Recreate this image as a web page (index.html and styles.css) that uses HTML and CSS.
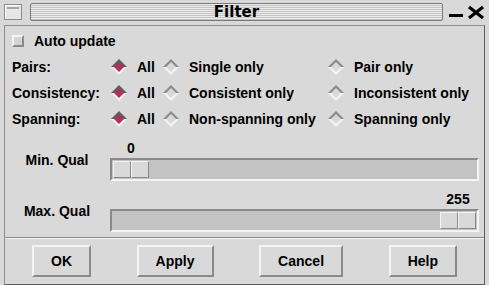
FILE: index.html
```html
<!DOCTYPE html>
<html lang="en">
<head>
  <meta charset="UTF-8">
  <title>Filter</title>
  <link rel="stylesheet" href="styles.css">
</head>
<body>

  <div class="titlebar">
    <div class="win-menu"><span></span></div>
    <div class="title">Filter</div>
    <svg class="win-btns" width="40" height="18" viewBox="0 0 40 18">
      <rect x="3" y="11" width="14" height="3" fill="#000"/>
      <path d="M23 4 L37 15 M37 4 L23 15" stroke="#000" stroke-width="3.2"/>
    </svg>
  </div>

  <div class="dialog">
    <div class="main">
      <div class="options">
        <label class="check-row"><span class="checkbox"></span>Auto update</label>

        <span class="opt-label">Pairs:</span>
        <span class="radio on"><svg viewBox="0 0 16 16"><path class="rt" d="M0 8 L8 0 L16 8Z"/><path class="rb" d="M0 8 L8 16 L16 8Z"/><path class="rf" d="M8 3 L13 8 L8 13 L3 8Z"/></svg>All</span>
        <span class="radio"><svg viewBox="0 0 16 16"><path class="rt" d="M0 8 L8 0 L16 8Z"/><path class="rb" d="M0 8 L8 16 L16 8Z"/><path class="rf" d="M8 3 L13 8 L8 13 L3 8Z"/></svg>Single only</span>
        <span class="radio"><svg viewBox="0 0 16 16"><path class="rt" d="M0 8 L8 0 L16 8Z"/><path class="rb" d="M0 8 L8 16 L16 8Z"/><path class="rf" d="M8 3 L13 8 L8 13 L3 8Z"/></svg>Pair only</span>

        <span class="opt-label">Consistency:</span>
        <span class="radio on"><svg viewBox="0 0 16 16"><path class="rt" d="M0 8 L8 0 L16 8Z"/><path class="rb" d="M0 8 L8 16 L16 8Z"/><path class="rf" d="M8 3 L13 8 L8 13 L3 8Z"/></svg>All</span>
        <span class="radio"><svg viewBox="0 0 16 16"><path class="rt" d="M0 8 L8 0 L16 8Z"/><path class="rb" d="M0 8 L8 16 L16 8Z"/><path class="rf" d="M8 3 L13 8 L8 13 L3 8Z"/></svg>Consistent only</span>
        <span class="radio"><svg viewBox="0 0 16 16"><path class="rt" d="M0 8 L8 0 L16 8Z"/><path class="rb" d="M0 8 L8 16 L16 8Z"/><path class="rf" d="M8 3 L13 8 L8 13 L3 8Z"/></svg>Inconsistent only</span>

        <span class="opt-label">Spanning:</span>
        <span class="radio on"><svg viewBox="0 0 16 16"><path class="rt" d="M0 8 L8 0 L16 8Z"/><path class="rb" d="M0 8 L8 16 L16 8Z"/><path class="rf" d="M8 3 L13 8 L8 13 L3 8Z"/></svg>All</span>
        <span class="radio"><svg viewBox="0 0 16 16"><path class="rt" d="M0 8 L8 0 L16 8Z"/><path class="rb" d="M0 8 L8 16 L16 8Z"/><path class="rf" d="M8 3 L13 8 L8 13 L3 8Z"/></svg>Non-spanning only</span>
        <span class="radio"><svg viewBox="0 0 16 16"><path class="rt" d="M0 8 L8 0 L16 8Z"/><path class="rb" d="M0 8 L8 16 L16 8Z"/><path class="rf" d="M8 3 L13 8 L8 13 L3 8Z"/></svg>Spanning only</span>
      </div>

      <div class="scales">
        <div class="scale-row">
          <span class="scale-label">Min. Qual</span>
          <div class="scale">
            <div class="scale-value" style="--pos: 0">0</div>
            <div class="trough"><div class="thumb" style="--pos: 0"></div></div>
          </div>
        </div>
        <div class="scale-row">
          <span class="scale-label">Max. Qual</span>
          <div class="scale">
            <div class="scale-value" style="--pos: 1">255</div>
            <div class="trough"><div class="thumb" style="--pos: 1"></div></div>
          </div>
        </div>
      </div>
    </div>

    <div class="buttons">
      <button>OK</button>
      <button>Apply</button>
      <button>Cancel</button>
      <button>Help</button>
    </div>
  </div>

</body>
</html>
```

FILE: styles.css
```css
body {
  margin: 0;
  width: 489px;
  height: 285px;
  overflow: hidden;
  background-color: #d9d9d9;
  color: #000;
  font-family: 'Liberation Sans', Arial, sans-serif;
  font-weight: bold;
  font-size: 14px;
}

/* window title bar */
.titlebar {
  height: 25px;
  box-sizing: border-box;
  padding: 3px 3px 0 4px;
  display: flex;
  align-items: flex-start;
  gap: 3px;
}

.win-menu {
  width: 18px;
  height: 16px;
  margin-top: 1px;
  box-sizing: border-box;
  border: 1px solid #8a8a8a;
  background-color: #e6e6e6;
  box-shadow: inset 1px 1px #fff;
}

.win-menu span {
  display: block;
  margin: 2px 2px 0;
  height: 2px;
  background-color: #a8a8a8;
}

.title {
  flex: 1;
  height: 18px;
  margin-left: 5px;
  box-sizing: border-box;
  border: 1px solid #7a7a7a;
  border-radius: 2px;
  background: repeating-linear-gradient(to bottom, #ececec 0, #ececec 1px, #c4c4c4 1px, #c4c4c4 2px);
  font-family: 'DejaVu Sans', sans-serif;
  font-size: 15px;
  line-height: 16px;
  text-align: center;
}

.win-btns {
  display: block;
}

/* dialog */
.dialog {
  margin: 0 4px;
  height: 260px;
  box-sizing: border-box;
  border: 1px solid;
  border-color: #8e8e8e #5c5c5c #5c5c5c #8e8e8e;
  display: flex;
  flex-direction: column;
}

.main {
  height: 211px;
  box-sizing: border-box;
  padding: 2px 5px 0 7px;
}

.options {
  display: grid;
  grid-template-columns: 99px 52px 165px auto;
  grid-auto-rows: 26px;
  align-items: center;
}

.check-row {
  grid-column: 1 / -1;
  display: flex;
  align-items: center;
  gap: 10px;
}

.checkbox {
  width: 12px;
  height: 12px;
  box-sizing: border-box;
  border: 2px solid;
  border-color: #f4f4f4 #8a8a8a #8a8a8a #f4f4f4;
  background-color: #d4d4d4;
}

.radio {
  display: flex;
  align-items: center;
  gap: 10px;
  white-space: nowrap;
}

.radio svg {
  width: 16px;
  height: 16px;
  display: block;
}

.radio .rt { fill: #8a8a8a; }
.radio .rb { fill: #f4f4f4; }
.radio .rf { fill: #d9d9d9; }
.radio.on .rt { fill: #5e5e5e; }
.radio.on .rf { fill: #b03060; }

/* scales */
.scales {
  margin: 8px 0 0 -5px;
  display: flex;
  flex-direction: column;
  gap: 10px;
}

.scale-row {
  display: flex;
  align-items: center;
}

.scale-label {
  width: 100px;
  text-align: center;
  margin-top: -2px;
}

.scale {
  flex: 1;
  margin-left: 3px;
}

.scale-value {
  width: 36px;
  height: 18px;
  line-height: 16px;
  text-align: center;
  margin-left: calc((100% - 42px) * var(--pos) + 3px);
}

.trough {
  height: 23px;
  box-sizing: border-box;
  border: 2px solid;
  border-color: #8a8a8a #f4f4f4 #f4f4f4 #8a8a8a;
  padding: 1px;
  background-color: #c3c3c3;
}

.thumb {
  width: 36px;
  height: 17px;
  margin-left: calc((100% - 36px) * var(--pos));
  display: flex;
}

.thumb::before,
.thumb::after {
  content: "";
  flex: 1;
  box-sizing: border-box;
  border: 1px solid;
  border-color: #f4f4f4 #8a8a8a #8a8a8a #f4f4f4;
  background-color: #d9d9d9;
}

/* button row */
.buttons {
  flex: 1;
  border-top: 1px solid #8a8a8a;
  box-shadow: inset 0 1px #f4f4f4;
  display: flex;
  align-items: center;
  justify-content: space-between;
  padding: 0 27px;
}

button {
  height: 32px;
  padding: 0 17px;
  box-sizing: border-box;
  border: 2px solid;
  border-color: #f4f4f4 #8a8a8a #8a8a8a #f4f4f4;
  background-color: #d9d9d9;
  color: #000;
  font-family: 'Liberation Sans', Arial, sans-serif;
  font-weight: bold;
  font-size: 14px;
}
```
